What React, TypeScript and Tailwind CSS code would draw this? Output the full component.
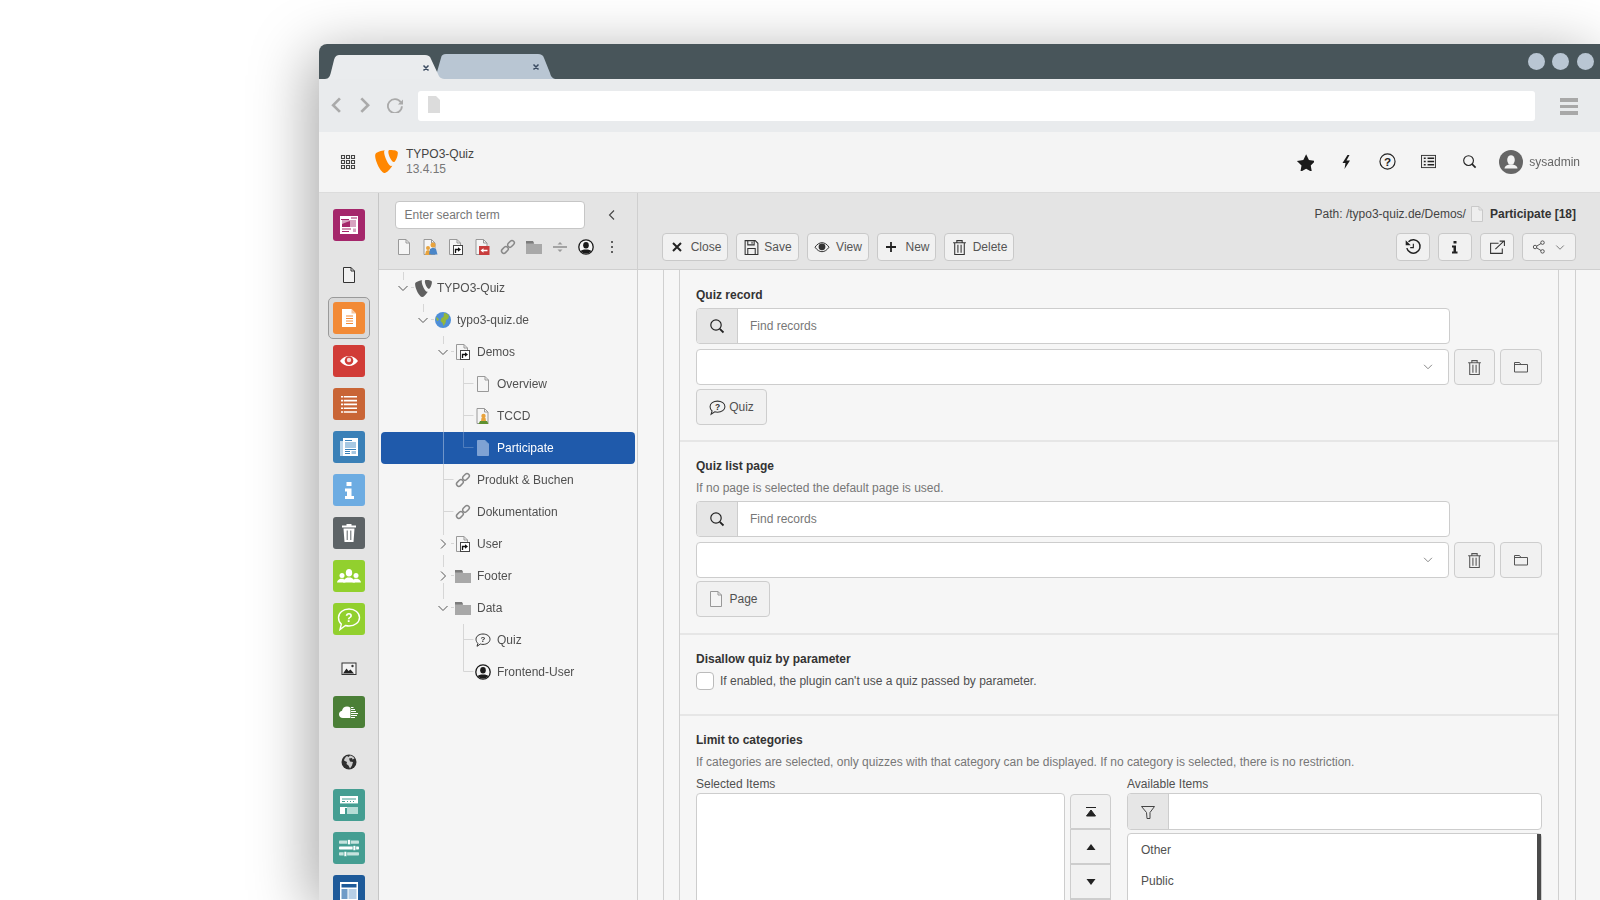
import React from "react";

const Svg = ({ s = 16, vb = "0 0 16 16", children, className = "" }: { s?: number; vb?: string; children: React.ReactNode; className?: string }) => (
  <svg width={s} height={s} viewBox={vb} className={"shrink-0 " + className}>{children}</svg>
);

const TYPO3_D = "M18.08 16.539c-.356.105-.64.144-1.012.144-3.048 0-7.528-10.652-7.528-14.197 0-1.305.31-1.74.745-2.114C6.56.808 2.082 2.177.65 3.917c-.309.436-.498 1.12-.498 1.99C.152 11.436 6.059 24 10.225 24c1.928 0 5.181-3.17 7.855-7.461M16.136 0c3.855 0 7.712.622 7.712 2.798 0 4.415-2.8 9.765-4.23 9.765-2.549 0-5.72-7.09-5.72-10.635C13.898.31 14.52 0 16.136 0";

const Page = ({ fill = "#f5f5f5", stroke = "#999", s = 16 }: { fill?: string; stroke?: string; s?: number }) => (
  <Svg s={s}>
    <path d="M2.5.5h7.5l3.5 3.5v11.5h-11z" fill={fill} stroke={stroke} />
    <path d="M10 .5v3.5h3.5" fill="none" stroke={stroke} />
  </Svg>
);
const PageShortcut = () => (
  <Svg>
    <path d="M1.5.5h7.5l3.5 3.5v11.500h-11z" fill="#f5f5f5" stroke="#999" />
    <path d="M9 .5v3.500h3.500" fill="none" stroke="#999" />
    <rect x="5.500" y="6.500" width="9" height="9" fill="#fff" stroke="#444" />
    <path d="M7.500 14v-3.500h3" fill="none" stroke="#111" strokeWidth="1.300" />
    <path d="M10 8.300l3 2.200-3 2.200z" fill="#111" />
  </Svg>
);
const PageUsers = ({ blue }: { blue?: boolean }) => (
  <Svg>
    <path d="M2 .5h7.500l3.500 3.500v11.500h-11z" fill="#f5f5f5" stroke="#999" />
    <path d="M9.500 .5v3.500h3.500" fill="none" stroke="#999" />
    {blue ? (
      <>
        <path d="M3 16l1-4 2-1 2 1 1 4z" fill="#e8a33d" />
        <circle cx="6" cy="9" r="2" fill="#e8a33d" />
        <path d="M7 15.500l1-5.500 3-1.500 3 1.500 1.500 5.500z" fill="#4a86c8" />
        <circle cx="11" cy="6" r="2.500" fill="#e8a33d" />
      </>
    ) : (
      <>
        <circle cx="8.500" cy="8" r="2.200" fill="#e8a33d" />
        <path d="M6.500 10h4l.5 3h-5z" fill="#e8a33d" />
        <path d="M3.500 16l1.500-3h7l1.500 3z" fill="#5f9130" />
      </>
    )}
  </Svg>
);
const PageRed = () => (
  <Svg>
    <path d="M2 .5h7.500l3.500 3.500v11.500h-11z" fill="#f5f5f5" stroke="#999" />
    <path d="M9.500 .5v3.500h3.500" fill="none" stroke="#999" />
    <rect x="5" y="7" width="10.500" height="9" fill="#c83c3c" />
    <path d="M6.500 11.500l3-2.200v1.400h4v1.600h-4v1.400z" fill="#fff" />
  </Svg>
);
const Chain = () => (
  <Svg>
    <g fill="none" stroke="#888" strokeWidth="1.500">
      <rect x="1.200" y="8.600" width="7.500" height="4.600" rx="2.300" transform="rotate(-45 5 11)" />
      <rect x="7.300" y="2.600" width="7.500" height="4.600" rx="2.300" transform="rotate(-45 11 5)" />
    </g>
  </Svg>
);
const Folder = () => (
  <Svg>
    <path d="M0 3h7l1 2h8v10H0z" fill="#a8a8a8" />
    <path d="M0 2h7l1.200 2.500H0z" fill="#7c7c7c" />
  </Svg>
);
const UserRound = ({ s = 16 }: { s?: number }) => (
  <Svg s={s}>
    <circle cx="8" cy="8" r="7.200" fill="#f5f5f5" stroke="#1a1a1a" strokeWidth="1.300" />
    <clipPath id="ucl"><circle cx="8" cy="8" r="6.600" /></clipPath>
    <g clipPath="url(#ucl)" fill="#1a1a1a">
      <ellipse cx="8" cy="6.200" rx="2.800" ry="3.300" />
      <path d="M1 16c0-4 3-5 5-5.500h4c2 .5 5 1.500 5 5.500z" />
    </g>
  </Svg>
);
const Bubble = ({ s = 16, c = "#333" }: { s?: number; c?: string }) => (
  <Svg s={s}>
    <path d="M8 2c3.900 0 7 2.200 7 5.200s-3.100 5.200-7 5.200c-.9 0-1.800-.1-2.600-.4L2 14.300l.9-3C1.700 10.300 1 8.900 1 7.200 1 4.200 4.100 2 8 2z" fill="none" stroke={c} strokeWidth="1" />
    <text x="8" y="10.200" textAnchor="middle" fontSize="8" fontWeight="700" fill={c} fontFamily="Liberation Sans">?</text>
  </Svg>
);
const Globe = ({ s = 16 }: { s?: number }) => (
  <Svg s={s}>
    <circle cx="8" cy="8" r="8" fill="#4e8fd8" />
    <path d="M9 1c2 0 4 1 5 3l-1 3-2 1-.5 3-2 3-1-3-2-2 1-3 2-1z" fill="#94b83a" />
    <path d="M1 5l2 1 1 2-2 1z" fill="#94b83a" />
  </Svg>
);
const Chev = ({ d, c = "#555" }: { d: "down" | "right"; c?: string }) => (
  <Svg s={16}>
    <path d={d === "down" ? "M3.500 6l4.500 4.500L12.500 6" : "M6 3.500l4.500 4.500L6 12.500"} fill="none" stroke={c} strokeWidth="1" />
  </Svg>
);

const ModIcon = ({ bg, children }: { bg: string; children: React.ReactNode }) => (
  <div className={"flex h-[32px] w-[32px] shrink-0 items-center justify-center rounded-[3px] " + bg}>
    <Svg s={32} vb="0 0 32 32">{children}</Svg>
  </div>
);

const Slot = ({ children, group, active }: { children: React.ReactNode; group?: boolean; active?: boolean }) => (
  <div className={"flex h-[43px] w-full shrink-0 items-center justify-center " + (group ? "mt-[7px]" : "")}>
    {active ? <div className="flex h-[42px] w-[42px] items-center justify-center rounded-[5px] border border-[#9a9a9a] bg-[#d9d9d9]">{children}</div> : children}
  </div>
);

const ModuleBar = () => (
  <div className="flex w-[60px] shrink-0 flex-col overflow-hidden border-r border-[#c6c6c6] bg-[#e4e4e4] pt-[10.500px]">
    <Slot>
      <ModIcon bg="bg-[#a5276b]">
        <rect x="7" y="7" width="18" height="18" fill="#fff" />
        <rect x="8" y="10" width="8" height="1" fill="#a5276b" /><rect x="18" y="8.500" width="6" height="1" fill="#a5276b" />
        <rect x="9" y="11" width="14" height="7" fill="#d8a2c0" />
        <path d="M9 18v-3l5-2 3-1v6z" fill="#a5276b" />
        <rect x="9" y="19.500" width="9" height="1" fill="#a5276b" /><rect x="9" y="22" width="7" height="1" fill="#a5276b" /><rect x="20" y="19.500" width="3" height="3.500" fill="#d8a2c0" />
      </ModIcon>
    </Slot>
    <Slot group>
      <Svg s={16}>
        <path d="M2.500.5h7.500l3.500 3.500v11.500h-11z" fill="#f1f1f1" stroke="#333" />
        <path d="M10 .5v3.500h3.500" fill="none" stroke="#333" />
      </Svg>
    </Slot>
    <Slot active>
      <ModIcon bg="bg-[#f28a36]">
        <path d="M9 7h9.500l4.500 4.500V25H9z" fill="#fff" />
        <path d="M18.500 7v4.500H23z" fill="#f6c49b" />
        <path d="M13 14h7M13 16.500h7M13 19h7M13 21.500h7" stroke="#f28a36" strokeWidth="1" />
      </ModIcon>
    </Slot>
    <Slot>
      <ModIcon bg="bg-[#d13c37]">
        <path d="M7 16c2.500-3.500 5.500-5 9-5s6.500 1.500 9 5c-2.500 3.500-5.500 5-9 5s-6.500-1.500-9-5z" fill="#fff" />
        <circle cx="16" cy="15.500" r="4.300" fill="#d13c37" />
        <circle cx="16" cy="15" r="2.200" fill="#fff" opacity=".8" />
      </ModIcon>
    </Slot>
    <Slot>
      <ModIcon bg="bg-[#c96536]">
        <g fill="none" stroke="#fff" strokeWidth="1.600">
          <path d="M8 8.800h16M8 12.600h16M8 16.400h16M8 20.200h16M8 24h16" />
        </g>
        <path d="M10.500 8v17" stroke="#c96536" strokeWidth=".8" />
      </ModIcon>
    </Slot>
    <Slot>
      <ModIcon bg="bg-[#3a80b7]">
        <path d="M7 10h3v15H7z" fill="#bcd6ea" />
        <path d="M10 7h15v18H10z" fill="#fff" />
        <rect x="12" y="9" width="7" height="1" fill="#3a80b7" />
        <rect x="12" y="11" width="11" height="6" fill="#a7c8e2" />
        <path d="M12 18.500h11M12 20.500h5M12 22.500h5" stroke="#3a80b7" strokeWidth="1" />
        <rect x="18.500" y="20" width="4.500" height="3" fill="#a7c8e2" />
      </ModIcon>
    </Slot>
    <Slot>
      <ModIcon bg="bg-[#6dace2]">
        <path d="M13.500 8h5v4h-5zM12 14.500h6.500V22H21v3H12v-3h2v-4.500h-2z" fill="#fff" />
      </ModIcon>
    </Slot>
    <Slot>
      <ModIcon bg="bg-[#5d6366]">
        <path d="M13.500 8.500V7h5v1.500H23v2H9v-2zM10.500 11.500h11L20.500 25h-9z" fill="#fff" />
        <path d="M14.200 13.500v9.500M17.800 13.500v9.500" stroke="#5d6366" strokeWidth="1" />
      </ModIcon>
    </Slot>
    <Slot>
      <ModIcon bg="bg-[#92d02e]">
        <g fill="#fff">
          <circle cx="9" cy="15.500" r="2.500" /><path d="M4 22.500c.3-2.500 2-3.300 3.500-3.800h3L12.500 22.500z" />
          <circle cx="23" cy="15.500" r="2.500" /><path d="M28 22.500c-.3-2.500-2-3.300-3.500-3.800h-3L19.500 22.500z" />
          <ellipse cx="16" cy="12.800" rx="3.200" ry="3.800" /><path d="M10 22.500c.3-3 2.500-4 4.300-5h3.400c1.800 1 4 2 4.300 5z" />
        </g>
      </ModIcon>
    </Slot>
    <Slot>
      <ModIcon bg="bg-[#92d02e]">
        <path d="M16 6c6 0 10.500 3.700 10.500 8.500S22 23 16 23c-1.200 0-2.400-.2-3.500-.5L7 26.500l1.300-5.400C6.500 19.600 5.500 17.200 5.500 14.500 5.500 9.700 10 6 16 6z" fill="none" stroke="#fff" strokeWidth="1.400" />
        <text x="16" y="19" textAnchor="middle" fontSize="12" fontWeight="700" fill="#fff" fontFamily="Liberation Sans">?</text>
      </ModIcon>
    </Slot>
    <Slot group>
      <Svg s={16}>
        <rect x="1" y="2" width="14" height="11.500" fill="#f4f4f4" stroke="#333" />
        <path d="M2 12.500l3.500-5 2 2.500 2-1.500 3.500 4z" fill="#222" />
        <circle cx="11.500" cy="5" r="1.200" fill="#333" />
      </Svg>
    </Slot>
    <Slot>
      <ModIcon bg="bg-[#4b7f37]">
        <path d="M10 22c-2.500 0-4-1.600-4-3.700 0-1.900 1.300-3.400 3-3.600.4-2.600 2.500-4.200 5-4.200 1.400 0 2.500.4 3.400 1.200V22z" fill="#fff" />
        <path d="M18 11.500h2.500M18 13.500h4M18 15.500h5M18 17.500h7M18 19.500h6M18 21.500h4" stroke="#fff" strokeWidth="1" />
      </ModIcon>
    </Slot>
    <Slot group>
      <Svg s={16}>
        <circle cx="8" cy="8" r="7.500" fill="#2e2e2e" />
        <path d="M9 1.500c2 .3 3.500 1.300 4.500 3l-2 1-.5-1.500-3 .5 1 3 3 .5-1 3.500-2 3-1.500-3-2-1.500.5-2-3-1.500c.3-2 1.500-3.500 3-4.500l1.500 1z" fill="#e8e8e8" opacity=".85" />
      </Svg>
    </Slot>
    <Slot>
      <ModIcon bg="bg-[#459e92]">
        <path d="M7 7h18v18H7z" fill="#fff" />
        <rect x="9" y="9.500" width="14" height="1" fill="#459e92" />
        <path d="M9 12.500h3M14 12.500h1M17 12.500h1M20 12.500h1" stroke="#459e92" strokeWidth="1" />
        <rect x="7" y="14" width="18" height="4" fill="#459e92" />
        <rect x="7" y="14" width="18" height=".8" fill="#a6d4cd" />
        <rect x="12" y="19" width="2" height="6" fill="#459e92" />
        <rect x="14" y="18" width="11" height="7" fill="#b6dcd6" />
      </ModIcon>
    </Slot>
    <Slot>
      <ModIcon bg="bg-[#459e92]">
        <g fill="#c6e3de">
          <rect x="6" y="8.500" width="20" height="3.200" rx=".8" />
          <rect x="6" y="20.300" width="20" height="3.200" rx=".8" />
        </g>
        <rect x="6" y="14.400" width="20" height="3.200" rx=".8" fill="#fff" />
        <rect x="14.500" y="7.500" width="2.800" height="5.300" fill="#fff" stroke="#459e92" strokeWidth=".7" />
        <rect x="20" y="13.400" width="2.800" height="5.300" fill="#fff" stroke="#459e92" strokeWidth=".7" />
        <rect x="11" y="19.300" width="2.800" height="5.300" fill="#fff" stroke="#459e92" strokeWidth=".7" />
      </ModIcon>
    </Slot>
    <Slot>
      <ModIcon bg="bg-[#1e5a99]">
        <rect x="7" y="7" width="18" height="18" fill="#fff" />
        <rect x="8.500" y="9" width="15" height="3.500" fill="#1e5a99" />
        <rect x="8.500" y="14" width="6" height="10" fill="#6f9bc7" />
        <rect x="15.500" y="14" width="8" height="10" fill="#b7cfe6" />
      </ModIcon>
    </Slot>
  </div>
);

type Row = { label: string; level: number; chev?: "down" | "right"; icon: React.ReactNode; selected?: boolean };
const rows: Row[] = [
  { label: "TYPO3-Quiz", level: 0, chev: "down", icon: <Svg s={17} vb="0 0 24 24"><path d={TYPO3_D} fill="#5f5f5f" /></Svg> },
  { label: "typo3-quiz.de", level: 1, chev: "down", icon: <Globe /> },
  { label: "Demos", level: 2, chev: "down", icon: <PageShortcut /> },
  { label: "Overview", level: 3, icon: <Page /> },
  { label: "TCCD", level: 3, icon: <PageUsers /> },
  { label: "Participate", level: 3, selected: true, icon: <Page fill="#7fa2d3" stroke="#7fa2d3" /> },
  { label: "Produkt & Buchen", level: 2, icon: <Chain /> },
  { label: "Dokumentation", level: 2, icon: <Chain /> },
  { label: "User", level: 2, chev: "right", icon: <PageShortcut /> },
  { label: "Footer", level: 2, chev: "right", icon: <Folder /> },
  { label: "Data", level: 2, chev: "down", icon: <Folder /> },
  { label: "Quiz", level: 3, icon: <Bubble /> },
  { label: "Frontend-User", level: 3, icon: <UserRound /> },
];

const paddings = ["pl-[14px]", "pl-[34px]", "pl-[54px]", "pl-[74px]"];

const TreeLines = () => (
  <svg width="258" height="630" className="pointer-events-none absolute left-0 top-0 z-10">
    <g transform="translate(-379,-270)" fill="none" stroke="#d6d6d6">
      <path d="M403.500 272v8M423.500 304v8M443.500 336v8M443.500 360v72M443.500 464v71M443.500 555v12M443.500 583v16" />
      <path d="M411 287.500h3M431 319.500h3M451 351.500h3M451 543.500h3M451 575.500h3M451 607.500h3" />
      <path d="M443.500 479.500h10M443.500 511.500h10" />
      <path d="M463.500 368v64M463.500 383.500h10M463.500 415.500h10" />
      <path d="M463.500 624v47.500h10M463.500 639.500h10" />
      <path d="M443.500 432v32" stroke="#6f95c9" />
      <path d="M463.500 432v15.500h10" stroke="#4f7dbd" />
    </g>
  </svg>
);

const Tree = () => (
  <div className="flex w-[259px] shrink-0 flex-col border-r border-[#cfcfcf]">
    <div className="h-[77px] shrink-0 border-b border-[#cfcfcf] bg-[#e4e4e4]">
      <div className="mt-[8px] flex h-[27px] items-center pl-[16px]">
        <div className="flex h-[28px] w-[190px] items-center rounded-[4px] border border-[#c6c6c6] bg-white pl-[8.500px] text-[#777]">Enter search term</div>
        <div className="ml-[19px]">
          <Svg s={16}><path d="M10 3.500L5.500 8l4.500 4.500" fill="none" stroke="#444" strokeWidth="1.100" /></Svg>
        </div>
      </div>
      <div className="mt-[6px] flex h-[26px] items-center pl-[12px]">
        {[<Page />, <PageUsers blue />, <PageShortcut />, <PageRed />, <Chain />, <Folder />,
          <Svg><path d="M1 8h14" stroke="#777" strokeWidth="1.200" /><path d="M5.500 5.500L8 3l2.500 2.500zM5.500 10.500L8 13l2.500-2.500z" fill="#999" /></Svg>,
          <UserRound />,
          <Svg><g fill="#333"><rect x="7" y="2" width="2" height="2" rx="1" /><rect x="7" y="7" width="2" height="2" rx="1" /><rect x="7" y="12" width="2" height="2" rx="1" /></g></Svg>,
        ].map((ic, i) => (
          <div key={i} className="flex w-[26px] items-center justify-center">{ic}</div>
        ))}
      </div>
    </div>
    <div className="relative flex-1 bg-[#f5f5f5] pt-[2px]">
      <TreeLines />
      {rows.map((r) => (
        <div key={r.label} className={"mx-[2px] flex h-[32px] items-center rounded-[4px] " + paddings[r.level] + " " + (r.selected ? "bg-[#1f5aab] text-white" : "text-[#505050]")}>
          <div className="flex h-[16px] w-[16px] items-center justify-center">{r.chev && <Chev d={r.chev} />}</div>
          <div className="ml-[4px] flex h-[16px] w-[16px] items-center justify-center">{r.icon}</div>
          <span className="ml-[6px]">{r.label}</span>
        </div>
      ))}
    </div>
  </div>
);

const HBtn = ({ w, label, icon, gap = "gap-[6px]" }: { w: string; label?: string; icon: React.ReactNode; gap?: string }) => (
  <div className={"flex h-[28px] items-center justify-center rounded-[4px] border border-[#c9c9c9] bg-[#f1f1f1] text-[#555] " + gap + " " + w}>
    {icon}
    {label && <span>{label}</span>}
  </div>
);

const SearchIc = ({ s = 16, c = "#222" }: { s?: number; c?: string }) => (
  <Svg s={s}><circle cx="7" cy="7" r="5.200" fill="none" stroke={c} strokeWidth="1.200" /><path d="M10.800 10.800L14.500 14.500" stroke={c} strokeWidth="1.800" /></Svg>
);
const TrashIc = ({ c = "#333", s = 16 }: { c?: string; s?: number }) => (
  <Svg s={s}>
    <g fill="none" stroke={c}>
      <path d="M2 3.500h12M5.500 3.500V1.500h5v2M3.500 3.500v11h9v-11M6.500 5.500v7.500M9.500 5.500v7.500" />
    </g>
  </Svg>
);
const FolderOut = () => (
  <Svg><path d="M1.500 3.500h5l1.500 2h6.500v7.500h-13z" fill="none" stroke="#555" /><path d="M1.500 5.500h6.500" stroke="#555" /></Svg>
);

const Header = () => (
  <div className="h-[77px] shrink-0 border-b border-[#cfcfcf] bg-[#e4e4e4] px-[24px]">
    <div className="mt-[13px] flex h-[16px] items-center justify-end text-[#444]">
      <span>Path: /typo3-quiz.de/Demos/</span>
      <span className="ml-[3px]"><Page fill="#eeeeee" stroke="#c9c9c9" /></span>
      <span className="ml-[5px] font-bold text-[#333]">Participate [18]</span>
    </div>
    <div className="mt-[11px] flex items-center justify-between">
      <div className="flex gap-[8px]">
        <HBtn w="w-[66px]" label="Close" icon={<Svg><path d="M4 4l8 8M12 4l-8 8" stroke="#222" strokeWidth="2" /></Svg>} />
        <HBtn w="w-[63px]" gap="gap-[4px]" label="Save" icon={<Svg s={17}><path d="M2 1.500h9.500l2.500 2.500v10.500H2z" fill="none" stroke="#333" /><path d="M4.500 1.500v4h6v-4M8.500 2.500v2M4.500 14.500v-5.500h7v5.500" fill="none" stroke="#333" /></Svg>} />
        <HBtn w="w-[62px]" label="View" icon={<Svg><path d="M1 8.200C3 5.200 5.500 3.700 8 3.700s5 1.500 7 4.500c-2 3-4.500 4.500-7 4.500S3 11.200 1 8.200z" fill="none" stroke="#333" /><circle cx="8" cy="7.800" r="3.400" fill="#333" /></Svg>} />
        <HBtn w="w-[59px]" label="New" icon={<Svg><path d="M8 3v10M3 8h10" stroke="#222" strokeWidth="1.800" /></Svg>} />
        <HBtn w="w-[70px]" gap="gap-[5px]" label="Delete" icon={<TrashIc s={17} />} />
      </div>
      <div className="flex gap-[8px]">
        <HBtn w="w-[34px]" icon={<Svg s={18}><path d="M4 3.300A6 6 0 1 1 2.500 9" fill="none" stroke="#222" strokeWidth="1.300" /><path d="M1.500 2v4.500H6z" fill="#222" /><path d="M8.300 5v3.500H5.500" fill="none" stroke="#222" /></Svg>} />
        <HBtn w="w-[34px]" icon={<Svg><path d="M6.500 2h3v2.500h-3zM5 6.500h4v6h1.500v2h-5.500v-2h1.500v-4h-1.500z" fill="#222" /></Svg>} />
        <HBtn w="w-[34px]" icon={<Svg s={17}><path d="M9 4H1.500v9.500h11V9" fill="none" stroke="#333" /><path d="M6 9.500L14 2M10 2h4.500v4.500" fill="none" stroke="#333" /></Svg>} />
        <div className="flex h-[28px] w-[54px] items-center justify-center gap-[8px] rounded-[4px] border border-[#c9c9c9] bg-[#f1f1f1]">
          <Svg s={14} vb="0 0 16 16"><circle cx="3.500" cy="8" r="2" fill="none" stroke="#444" /><circle cx="12" cy="3" r="2" fill="none" stroke="#444" /><circle cx="12" cy="13" r="2" fill="none" stroke="#444" /><path d="M5.300 7l5-3M5.300 9l5 3" stroke="#444" /></Svg>
          <Svg s={12}><path d="M3 6l5 5 5-5" fill="none" stroke="#555" /></Svg>
        </div>
      </div>
    </div>
  </div>
);

const FindRecords = () => (
  <div className="flex h-[36px] w-[754px] overflow-hidden rounded-[4px] border border-[#cdcdcd] bg-white">
    <div className="flex w-[41px] items-center justify-center border-r border-[#cdcdcd] bg-[#e6e6e6]"><SearchIc /></div>
    <div className="flex flex-1 items-center pl-[12px] text-[#777]">Find records</div>
  </div>
);

const SelectRow = () => (
  <div className="mt-[5px] flex gap-[5px]">
    <div className="flex h-[36px] w-[754px] items-center justify-end rounded-[4px] border border-[#cdcdcd] bg-white pr-[13px]">
      <Svg s={14}><path d="M3.500 5.500L8 10l4.500-4.500" fill="none" stroke="#777" /></Svg>
    </div>
    <div className="flex h-[36px] w-[41px] items-center justify-center rounded-[4px] border border-[#cdcdcd] bg-[#f1f1f1]"><TrashIc c="#555" s={17} /></div>
    <div className="flex h-[36px] w-[42px] items-center justify-center rounded-[4px] border border-[#cdcdcd] bg-[#f1f1f1]"><FolderOut /></div>
  </div>
);

const FormBody = () => (
  <div className="flex-1 overflow-hidden bg-[#f6f6f6] pl-[25px] pr-[24px]">
    <div className="h-full border-x border-[#d0d0d0] pl-[15px] pr-[16px]">
      <div className="h-full border-x border-[#d0d0d0] text-[#505050]">
        <section className="h-[172px] border-b-2 border-[#e6e6e6] px-[16px] pt-[17px]">
          <div className="h-[16px] font-bold leading-[16px] text-[#333]">Quiz record</div>
          <div className="mt-[5px]"><FindRecords /></div>
          <SelectRow />
          <div className="mt-[4px] flex h-[36px] w-[71px] items-center justify-center gap-[3px] rounded-[4px] border border-[#cdcdcd] bg-[#f1f1f1]"><Bubble s={17} />Quiz</div>
        </section>
        <section className="h-[193px] border-b-2 border-[#e6e6e6] px-[16px] pt-[16px]">
          <div className="h-[16px] font-bold leading-[16px] text-[#333]">Quiz list page</div>
          <div className="mt-[6px] h-[16px] leading-[16px] text-[#777]">If no page is selected the default page is used.</div>
          <div className="mt-[5px]"><FindRecords /></div>
          <SelectRow />
          <div className="mt-[3px] flex h-[36px] w-[74px] items-center justify-center gap-[5px] rounded-[4px] border border-[#cdcdcd] bg-[#f1f1f1]"><Page />Page</div>
        </section>
        <section className="h-[81px] border-b-2 border-[#e6e6e6] px-[16px] pt-[16px]">
          <div className="h-[16px] font-bold leading-[16px] text-[#333]">Disallow quiz by parameter</div>
          <div className="mt-[5px] flex items-center">
            <div className="h-[18px] w-[18px] rounded-[4px] border border-[#bbb] bg-white" />
            <span className="ml-[6px]">If enabled, the plugin can't use a quiz passed by parameter.</span>
          </div>
        </section>
        <section className="px-[16px] pt-[16px]">
          <div className="h-[16px] font-bold leading-[16px] text-[#333]">Limit to categories</div>
          <div className="mt-[6px] h-[16px] leading-[16px] text-[#777]">If categories are selected, only quizzes with that category can be displayed. If no category is selected, there is no restriction.</div>
          <div className="mt-[6px] flex">
            <div className="w-[369px]">
              <div className="h-[16px] leading-[16px]">Selected Items</div>
              <div className="mt-[1px] h-[200px] rounded-[4px] border border-[#cdcdcd] bg-white" />
            </div>
            <div className="ml-[5px] mt-[18px] w-[41px]">
              {["M3 3.500h10M8 6l4.500 6h-9z", "M8 5l4.500 6h-9z", "M8 11L3.500 5h9z", "M8 11L3.500 5h9z"].map((d, i) => (
                <div key={i} className="flex h-[35px] items-center justify-center border border-[#cdcdcd] bg-[#f1f1f1] first:rounded-t-[4px]">
                  <Svg><path d={d} fill="#222" stroke={i === 0 ? "#222" : "none"} strokeWidth={i === 0 ? 1 : 0} /></Svg>
                </div>
              ))}
            </div>
            <div className="ml-[16px] w-[415px]">
              <div className="h-[16px] leading-[16px]">Available Items</div>
              <div className="mt-[1px] flex h-[37px] overflow-hidden rounded-[4px] border border-[#cdcdcd] bg-white">
                <div className="flex w-[41px] items-center justify-center border-r border-[#cdcdcd] bg-[#e6e6e6]">
                  <Svg><path d="M1.500 2.500h13L10 8.500v6l-3 0-.5-6z" fill="none" stroke="#444" /></Svg>
                </div>
              </div>
              <div className="relative mt-[3px] h-[200px] rounded-[4px] border border-[#cdcdcd] bg-white">
                <div className="absolute right-0 top-0 h-full w-[4px] bg-[#4a4a4a]" />
                <div className="flex h-[31px] items-center pl-[13px]">Other</div>
                <div className="flex h-[31px] items-center pl-[13px]">Public</div>
              </div>
            </div>
          </div>
        </section>
      </div>
    </div>
  </div>
);

export default function App() {
  return (
    <div className="h-[900px] w-[1600px] overflow-hidden bg-white pl-[319px] pt-[44px] font-['Liberation_Sans',sans-serif] text-[12px]">
      <div className="flex h-[856px] w-[1281px] flex-col rounded-tl-[8px] shadow-[-8px_10px_60px_rgba(0,0,0,0.35)] blur-[0.4px]">
        {/* tab strip */}
        <div className="flex h-[35px] shrink-0 items-end justify-between rounded-tl-[8px] bg-[#48555a]">
          <svg width="240" height="25" viewBox="0 0 240 25" className="shrink-0">
            <path d="M116 25L122 4C122.600 1 124 0 127 0H219C222 0 224 1 225 4L231 19C232 23 234 25 238 25Z" fill="#b9c6d3" />
            <path d="M6 25C10 25 11 22 12 18L15 6C16 2 18 1 21 1H106C109 1 111 2 112 5L119 20C120 23 122 25 127 25Z" fill="#eaecee" />
            <path d="M104.500 11.500l5 5M109.500 11.500l-5 5M214.500 10.500l5 5M219.500 10.500l-5 5" stroke="#3a4a60" strokeWidth="1.500" />
          </svg>
          <div className="mb-[9.500px] mr-[6.500px] flex gap-[7.500px]">
            <div className="h-[17px] w-[17px] rounded-full bg-[#b9c6d3]" />
            <div className="h-[17px] w-[17px] rounded-full bg-[#b9c6d3]" />
            <div className="h-[17px] w-[17px] rounded-full bg-[#b9c6d3]" />
          </div>
        </div>
        {/* toolbar */}
        <div className="flex h-[53px] shrink-0 items-center bg-[#e9ebed]">
          <div className="flex w-[99px] items-center pb-[3px] pl-[8px]">
            <Svg s={18}><path d="M11.500 3L5.500 9l6 6" fill="none" stroke="#aaa" strokeWidth="2.400" /></Svg>
            <Svg s={18} className="ml-[9px]"><path d="M6.500 3l6 6-6 6" fill="none" stroke="#aaa" strokeWidth="2.400" /></Svg>
            <Svg s={18} className="ml-[13px]"><path d="M14 6.500A6.200 6.200 0 1 0 15 10" fill="none" stroke="#aaa" strokeWidth="1.600" /><path d="M16.500 3.500v5h-5z" fill="#aaa" /></Svg>
          </div>
          <div className="flex h-[30px] w-[1117px] items-center rounded-[3px] bg-white pl-[10px]">
            <svg width="12" height="17" viewBox="0 0 12 17" className="mb-[2px]"><path d="M0 0h8l4 4v13H0z" fill="#dcdcdc" /></svg>
          </div>
          <div className="ml-[25px] mt-[2px] flex flex-col gap-[3px]">
            <div className="h-[3.500px] w-[18px] bg-[#a8a8a8]" />
            <div className="h-[3.500px] w-[18px] bg-[#a8a8a8]" />
            <div className="h-[3.500px] w-[18px] bg-[#a8a8a8]" />
          </div>
        </div>
        {/* top bar */}
        <div className="flex h-[61px] shrink-0 items-center border-b border-[#dcdcdc] bg-[#f4f4f4] pb-[1px] pl-[21px] pr-[20px]">
          <Svg s={16}><g fill="none" stroke="#444" strokeWidth="1.100"><path d="M1.500 1.500h3v3h-3zM6.500 1.500h3v3h-3zM11.500 1.500h3v3h-3zM1.500 6.500h3v3h-3zM6.500 6.500h3v3h-3zM11.500 6.500h3v3h-3zM1.500 11.500h3v3h-3zM6.500 11.500h3v3h-3zM11.500 11.500h3v3h-3z" /></g></Svg>
          <Svg s={23} vb="0 0 24 24" className="ml-[19px]"><path d={TYPO3_D} fill="#ff8700" /></Svg>
          <div className="ml-[8px] leading-[15px]">
            <div className="text-[#444]">TYPO3-Quiz</div>
            <div className="text-[#777]">13.4.15</div>
          </div>
          <div className="ml-auto flex items-center">
            <div className="flex w-[41px] justify-center pr-[2px]"><Svg s={18}><path d="M9 1l2.500 5.300 5.700.8-4.100 4 1 5.700L9 14.100l-5.100 2.700 1-5.700-4.100-4 5.700-.8z" fill="#1a1a1a" /></Svg></div>
            <div className="flex w-[41px] justify-center pr-[2px]"><Svg s={16}><path d="M9.500 1L4.500 9h3l-1 6L12 6.500H8.500L11.500 1z" fill="#1a1a1a" /></Svg></div>
            <div className="flex w-[41px] justify-center"><Svg s={17}><circle cx="8" cy="8" r="7.100" fill="none" stroke="#222" strokeWidth="1.100" /><text x="8" y="11.800" textAnchor="middle" fontSize="11" fontWeight="700" fill="#222" fontFamily="Liberation Sans">?</text></Svg></div>
            <div className="flex w-[41px] justify-center"><Svg s={15}><rect x=".5" y="1.500" width="15" height="13" fill="#eee" stroke="#333" /><path d="M3 4.500h2M7 4.500h7M3 8h2M7 8h7M3 11.500h2M7 11.500h7" stroke="#222" strokeWidth="1.600" /></Svg></div>
            <div className="flex w-[41px] justify-center"><SearchIc s={15} /></div>
            <div className="ml-[9px] flex h-[24px] w-[24px] items-center justify-center overflow-hidden rounded-full bg-[#666]">
              <svg width="24" height="24" viewBox="0 0 24 24"><ellipse cx="12" cy="10" rx="3.800" ry="4.800" fill="#f4f4f4" /><path d="M5.500 18.500c0-2.500 3-3.500 4.500-4h4c1.500.5 4.500 1.500 4.500 4z" fill="#f4f4f4" /></svg>
            </div>
            <span className="ml-[6px] text-[#666]">sysadmin</span>
          </div>
        </div>
        {/* main */}
        <div className="flex min-h-0 flex-1 overflow-hidden">
          <ModuleBar />
          <Tree />
          <div className="flex min-w-0 flex-1 flex-col">
            <Header />
            <FormBody />
          </div>
        </div>
      </div>
    </div>
  );
}
